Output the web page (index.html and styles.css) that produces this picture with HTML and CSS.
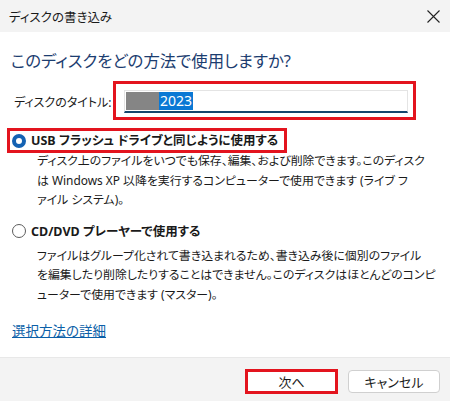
FILE: index.html
```html
<!DOCTYPE html>
<html lang="ja">
<head>
    <meta charset="UTF-8">
    <meta name="viewport" content="width=device-width, initial-scale=1.0">
    <title>ディスクの書き込み</title>
    <link rel="stylesheet" href="styles.css">
</head>
<body>
    <div class="dialog">
        <div class="titlebar">
            <span class="title">ディスクの書き込み</span>
            <svg class="close" width="13" height="13" viewBox="0 0 13 13">
                <path d="M0.5 0.5 L12.5 12.5 M12.5 0.5 L0.5 12.5" stroke="#222" stroke-width="1.1" fill="none"/>
            </svg>
        </div>

        <div class="content">
            <h1>このディスクをどの方法で使用しますか?</h1>

            <div class="title-row">
                <span class="label">ディスクのタイトル:</span>
                <div class="mark-box field-box">
                    <div class="textbox">
                        <span class="redacted"></span><span class="selected">2023</span>
                    </div>
                </div>
            </div>

            <div class="option">
                <div class="radio-row mark-box">
                    <span class="radio checked"></span>
                    <span class="option-name">USB フラッシュ ドライブと同じように使用する</span>
                </div>
                <p class="desc first">ディスク上のファイルをいつでも保存、編集、および削除できます。このディスク<br>は Windows XP 以降を実行するコンピューターで使用できます (ライブ フ<br>ァイル システム)。</p>
            </div>

            <div class="option">
                <div class="radio-row plain">
                    <span class="radio"></span>
                    <span class="option-name">CD/DVD プレーヤーで使用する</span>
                </div>
                <p class="desc second">ファイルはグループ化されて書き込まれるため、書き込み後に個別のファイル<br>を編集したり削除したりすることはできません。このディスクはほとんどのコンピ<br>ューターで使用できます (マスター)。</p>
            </div>

            <a class="help-link" href="#">選択方法の詳細</a>
        </div>

        <div class="footer">
            <button class="btn btn-next">次へ</button>
            <button class="btn">キャンセル</button>
        </div>
    </div>
</body>
</html>
```

FILE: styles.css
```css
body {
    margin: 0;
    background: #ffffff;
    font-family: "Noto Sans", "Noto Sans CJK JP", sans-serif;
    font-feature-settings: "palt";
    color: #1a1a1a;
}

.dialog {
    width: 450px;
    height: 401px;
    display: flex;
    flex-direction: column;
    overflow: hidden;
}

.titlebar {
    height: 32px;
    flex: none;
    background: #f3f3f3;
    display: flex;
    align-items: center;
    justify-content: space-between;
    padding: 0 10px 0 9px;
}

.title {
    font-size: 12.5px;
    color: #1a1a1a;
}

.close {
    margin-top: 1px;
}

.content {
    flex: 1;
    padding: 17px 12px 0 12px;
}

h1 {
    margin: 0;
    font-size: 16.4px;
    font-weight: normal;
    line-height: 24px;
    color: #1c3d70;
    margin-left: -1px;
}

.title-row {
    display: flex;
    align-items: center;
    margin-top: 8px;
}

.label {
    font-size: 12px;
    margin-left: 2px;
    width: 99px;
    margin-top: 3px;
    white-space: nowrap;
}

.mark-box {
    border: 3px solid #e3141e;
    background: #ffffff;
}

.field-box {
    box-sizing: border-box;
    height: 39px;
    width: 303px;
    padding: 6px 5px 4px 8px;
}

.textbox {
    height: 23px;
    box-sizing: border-box;
    border: 1px solid #e4e4e4;
    border-bottom: 2px solid #14466e;
    display: flex;
    align-items: center;
    padding-left: 1px;
}

.redacted {
    width: 33px;
    height: 18px;
    background: #858585;
}

.selected {
    background: #0a78d4;
    color: #ffffff;
    font-size: 14px;
    line-height: 18px;
    padding: 0 1px;
}

.option {
    margin-top: 8px;
}

.radio-row {
    display: inline-flex;
    align-items: center;
    gap: 5px;
    height: 25px;
    box-sizing: border-box;
    padding: 0 6px 0 2px;
    margin-left: -5px;
    position: relative;
    z-index: 1;
}

.radio-row.plain {
    border: 3px solid transparent;
}

.radio {
    width: 14px;
    height: 14px;
    box-sizing: border-box;
    border-radius: 50%;
    border: 1px solid #5c5c5c;
    background: #ffffff;
}

.radio.checked {
    border: 4px solid #1462b3;
    background: #ffffff;
}

.option-name {
    font-size: 12.5px;
    font-weight: bold;
    line-height: 19px;
}

.desc {
    margin: 0 0 0 25px;
    font-size: 11.9px;
    line-height: 19.5px;
    white-space: nowrap;
}

.desc.first {
    margin-top: -2px;
}

.desc.second {
    margin-top: 2px;
}

.option + .option {
    margin-top: 9px;
}

.help-link {
    display: inline-block;
    margin-top: 18px;
    font-size: 13.5px;
    line-height: 19.5px;
    color: #0b5fa8;
    text-decoration: underline;
}

.footer {
    height: 44px;
    flex: none;
    box-sizing: border-box;
    background: #f3f3f3;
    border-top: 1px solid #e8e8e8;
    display: flex;
    justify-content: flex-end;
    align-items: flex-start;
    gap: 10px;
    padding: 11px 10px 0 0;
}

.btn {
    width: 92px;
    height: 23px;
    margin-top: 1px;
    box-sizing: border-box;
    background: #ffffff;
    border: 1px solid #d0d0d0;
    border-radius: 4px;
    font-family: "Noto Sans", "Noto Sans CJK JP", sans-serif;
    font-feature-settings: "palt";
    font-size: 13px;
    color: #1a1a1a;
    padding: 0;
}

.btn-next {
    width: 93px;
    height: 25px;
    margin-top: 0;
    border: 3px solid #e3141e;
    border-radius: 0;
}
```
